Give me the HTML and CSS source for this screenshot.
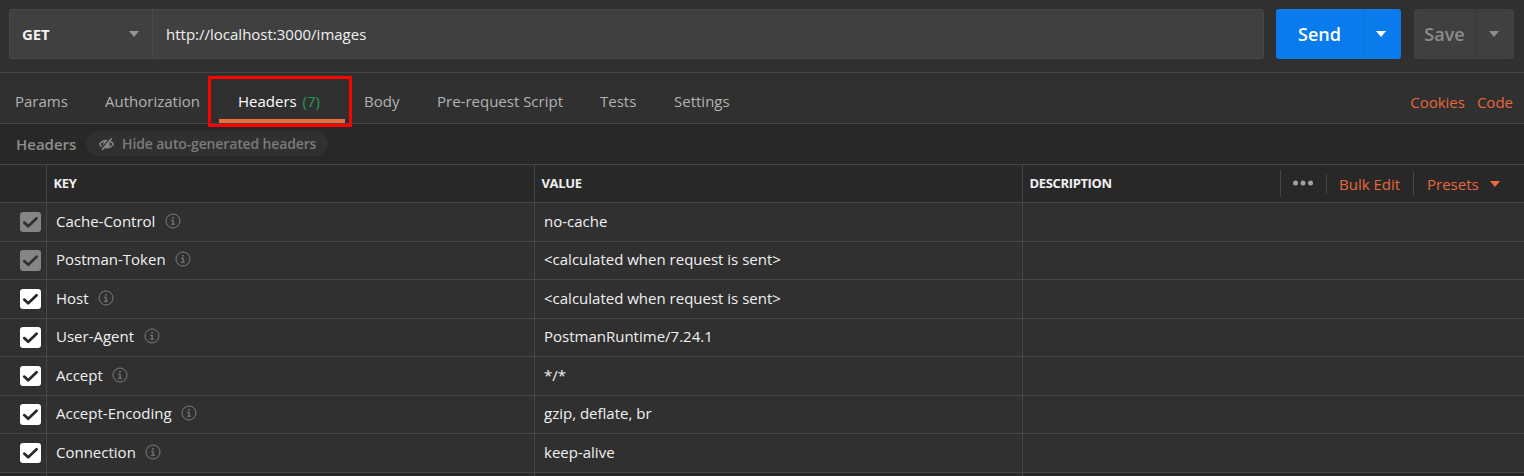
FILE: index.html
```html
<!DOCTYPE html>
<html lang="en">
<head>
<meta charset="utf-8">
<title>Request headers</title>
<link rel="stylesheet" href="styles.css">
</head>
<body>
<svg class="defs" aria-hidden="true">
  <symbol id="caret" viewBox="0 0 10 6"><path d="M0 0h10L5 6z"/></symbol>
  <symbol id="check" viewBox="0 0 21 20"><path d="M4.2 10.6l4 3.7 8.4-8" fill="none" stroke="currentColor" stroke-width="2.7" stroke-linecap="round" stroke-linejoin="round"/></symbol>
  <symbol id="info" viewBox="0 0 16 16"><circle cx="8" cy="8" r="7" fill="none" stroke="currentColor"/><path d="M7.2 4h1.6v1.5H7.2zM6 6.8h2.7v4H10v.9H6v-.9h1.5V7.7H6z"/></symbol>
</svg>
<main class="app">
  <section class="request-bar">
    <div class="request-field">
      <div class="method"><span>GET</span><svg class="caret"><use href="#caret"/></svg></div>
      <div class="url"><span>http://localhost:3000/images</span></div>
    </div>
    <div class="button send"><span class="label">Send</span><span class="arrow"><svg class="caret"><use href="#caret"/></svg></span></div>
    <div class="button save"><span class="label">Save</span><span class="arrow"><svg class="caret"><use href="#caret"/></svg></span></div>
  </section>
  <nav class="tabs">
    <span class="tab params">Params</span>
    <span class="tab auth">Authorization</span>
    <span class="tab active">Headers <span class="count">(7)</span><span class="highlight"></span></span>
    <span class="tab body">Body</span>
    <span class="tab script">Pre-request Script</span>
    <span class="tab tests">Tests</span>
    <span class="tab settings">Settings</span>
    <span class="link cookies">Cookies</span>
    <span class="link code">Code</span>
  </nav>
  <section class="toolbar">
    <span class="title">Headers</span>
    <span class="pill"><svg class="eye" viewBox="0 0 16 14"><path d="M.7 7.2C4 1.9 12 1.9 15.3 7.2 12 12.3 4 12.3.7 7.2z" fill="none" stroke="currentColor" stroke-width="1.6"/><circle cx="8" cy="7" r="3.6" fill="currentColor"/><path d="M12.4.2L2.2 12.6" stroke="#303030" stroke-width="1.6"/><path d="M13.6.8L3.2 13.3" stroke="currentColor" stroke-width="1.6"/></svg><span class="pill-text">Hide auto-generated headers</span></span>
  </section>
  <section class="table">
    <div class="row head">
      <div class="cell tick"></div>
      <div class="cell"><span>KEY</span></div>
      <div class="cell"><span>VALUE</span></div>
      <div class="cell description"><span>DESCRIPTION</span>
        <div class="actions">
          <span class="more"><svg class="dots" viewBox="0 0 20 6"><circle cx="2.5" cy="3" r="2.5"/><circle cx="10" cy="3" r="2.5"/><circle cx="17.5" cy="3" r="2.5"/></svg></span>
          <span class="bulk">Bulk Edit</span>
          <span class="presets"><span>Presets</span><svg class="caret"><use href="#caret"/></svg></span>
        </div>
      </div>
    </div>
    <div class="rows">
      <div class="row"><div class="cell tick"><svg class="box locked"><use href="#check"/></svg></div><div class="cell"><span>Cache-Control</span><svg class="info"><use href="#info"/></svg></div><div class="cell"><span>no-cache</span></div><div class="cell"></div></div>
      <div class="row"><div class="cell tick"><svg class="box locked"><use href="#check"/></svg></div><div class="cell"><span>Postman-Token</span><svg class="info"><use href="#info"/></svg></div><div class="cell"><span>&lt;calculated when request is sent&gt;</span></div><div class="cell"></div></div>
      <div class="row"><div class="cell tick"><svg class="box"><use href="#check"/></svg></div><div class="cell"><span>Host</span><svg class="info"><use href="#info"/></svg></div><div class="cell"><span>&lt;calculated when request is sent&gt;</span></div><div class="cell"></div></div>
      <div class="row"><div class="cell tick"><svg class="box"><use href="#check"/></svg></div><div class="cell"><span>User-Agent</span><svg class="info"><use href="#info"/></svg></div><div class="cell"><span>PostmanRuntime/7.24.1</span></div><div class="cell"></div></div>
      <div class="row"><div class="cell tick"><svg class="box"><use href="#check"/></svg></div><div class="cell"><span>Accept</span><svg class="info"><use href="#info"/></svg></div><div class="cell"><span>*/*</span></div><div class="cell"></div></div>
      <div class="row"><div class="cell tick"><svg class="box"><use href="#check"/></svg></div><div class="cell"><span>Accept-Encoding</span><svg class="info"><use href="#info"/></svg></div><div class="cell"><span>gzip, deflate, br</span></div><div class="cell"></div></div>
      <div class="row"><div class="cell tick"><svg class="box"><use href="#check"/></svg></div><div class="cell"><span>Connection</span><svg class="info"><use href="#info"/></svg></div><div class="cell"><span>keep-alive</span></div><div class="cell"></div></div>
      <div class="row next"><div class="cell tick"></div><div class="cell"></div><div class="cell"></div><div class="cell"></div></div>
    </div>
  </section>
</main>
</body>
</html>
```
FILE: styles.css
```css
* { box-sizing: border-box; }
body { margin: 0; background: #282828; overflow: hidden; }
.defs { display: none; }
.app {
  width: 1524px;
  height: 476px;
  overflow: hidden;
  font-family: "Open Sans", "Noto Sans", sans-serif;
  font-size: 15px;
  line-height: 20px;
  color: #f0f0f0;
  white-space: nowrap;
}
svg { display: block; flex: none; fill: currentColor; }
.caret { width: 10px; height: 6px; }

.request-bar {
  display: flex;
  height: 73px;
  padding: 9px 10px 0 9px;
  background: #303030;
  border-bottom: 1px solid #464646;
}
.request-field {
  display: flex;
  width: 1255px;
  height: 50px;
  margin-right: 12px;
  background: #404040;
  border: 1px solid #484848;
  border-radius: 3px;
}
.method {
  display: flex;
  align-items: center;
  justify-content: space-between;
  width: 143px;
  padding: 0 13px 0 12px;
  border-right: 1px solid #4a4a4a;
  font-size: 15px;
  letter-spacing: -.1px;
  font-weight: 700;
}
.method .caret { color: #969696; }
.url { display: flex; align-items: center; padding-left: 13px; }
.button {
  display: flex;
  height: 50px;
  border-radius: 3px;
  font-size: 18px;
  font-weight: 600;
}
.button .label { display: flex; align-items: center; justify-content: center; }
.arrow { display: flex; flex: 1; align-items: center; padding-left: 12px; border-left: 1px solid #1170d2; }
.send { width: 125px; margin-right: 13px; background: #097bed; color: #fff; }
.send .label { width: 87px; }
.save { width: 100px; background: #404040; color: #8c8c8c; }
.save .label { width: 61px; }
.save .arrow { padding-left: 13px; border-color: #363636; }

.tabs {
  display: flex;
  height: 51px;
  padding: 0 11px 0 15px;
  background: #303030;
  border-bottom: 1px solid #464646;
  color: #b2b2b2;
  line-height: 56px;
}
.params { width: 90px; }
.auth { width: 114px; }
.active {
  position: relative;
  width: 126px;
  height: 50px;
  padding-left: 19px;
  margin-right: 19px;
  border-bottom: 4px solid #f26b3a;
  color: #fff;
}
.count { margin-left: 2px; color: #249d4d; }
.highlight {
  position: absolute;
  top: 3px;
  left: -11px;
  width: 144px;
  height: 51px;
  border: 3px solid #f00;
}
.body { width: 73px; }
.script { width: 163px; }
.tests { width: 74px; }
.link { color: #e8673a; line-height: 58px; }
.cookies { margin-left: auto; margin-right: 12px; }

.toolbar { display: flex; height: 41px; padding: 7px 0 0 16px; border-bottom: 1px solid #464646; }
.title { width: 70px; line-height: 26px; font-weight: 600; color: #8e8e8e; }
.pill {
  display: flex;
  width: 242px;
  height: 25px;
  padding-left: 13px;
  align-items: center;
  border-radius: 13px;
  background: #303030;
  color: #7b7b7b;
  font-size: 14px;
  font-weight: 600;
  letter-spacing: -.14px;
}
.eye { width: 15px; height: 14px; margin-right: 8px; color: #858585; }

.row { display: grid; grid-template-columns: 46px 488px 488px 1fr; }
.rows .row { height: 39px; background: #303030; border-bottom: 1px solid #464646; }
.rows .row:nth-child(even) { height: 38px; }
.rows .next { background: #282828; }
.cell { display: flex; align-items: center; padding-left: 9px; }
.cell + .cell { border-left: 1px solid #464646; }
.rows .cell + .cell { padding-bottom: 2px; }
.rows .row:nth-child(even) .cell + .cell { padding-bottom: 3px; }
.tick { align-items: flex-start; padding: 9px 0 0 20px; }
.box { width: 21px; height: 20px; border-radius: 3px; background: #fff; color: #282828; }
.locked { background: #858585; color: #303030; }
.row:nth-child(even) .tick { padding-top: 8px; }
.row:nth-child(even) .box { height: 21px; }
.info { width: 16px; height: 16px; margin: 0 0 1px 9.5px; color: #7c7c7c; }
.head { height: 38px; border-bottom: 1px solid #464646; font-size: 13px; font-weight: 700; letter-spacing: -.35px; }
.head .cell { padding-left: 6.5px; }
.head .cell > span { margin-bottom: 2px; }
.actions {
  display: flex;
  align-items: center;
  margin-left: auto;
  color: #e8673a;
  font-size: 15px;
  font-weight: 400;
  letter-spacing: 0;
}
.more { display: flex; width: 46px; height: 27px; padding: 10px 0 0 12px; border-left: 1px solid #464646; color: #a0a0a0; }
.dots { width: 20px; height: 6px; }
.bulk { width: 87px; height: 20px; padding-left: 12px; border-left: 1px solid #464646; line-height: 20px; }
.presets { display: flex; align-items: center; width: 111px; height: 25px; padding: 0 0 0 13px; border-left: 1px solid #464646; }
.presets .caret { margin-left: 11px; color: #f26b3a; }
```
